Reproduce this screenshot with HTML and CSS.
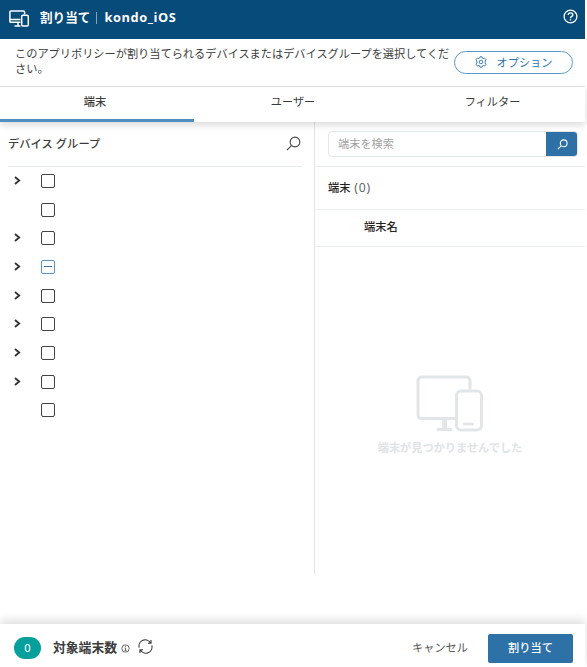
FILE: index.html
```html
<!DOCTYPE html>
<html lang="ja">
<head>
<meta charset="utf-8">
<title>割り当て</title>
<link rel="stylesheet" href="styles.css">
</head>
<body>
<div class="dialog">
  <header class="header">
    <svg class="header-icon" width="21" height="18" viewBox="0 0 21 18" fill="none" stroke="#fff" stroke-width="1.5">
      <path d="M11.5 12.3H2Q.9 12.3 .9 11.2V2Q.9.9 2 .9H14.5Q15.6.9 15.6 2V4.5M1 9.5H11.5M5.5 16H11.5M9 12.5V16"/>
      <rect x="12.7" y="5.2" width="6.6" height="10.8" rx="1.2"/>
    </svg>
    <h1 class="title">割り当て</h1>
    <span class="title-sep"></span>
    <span class="policy">kondo_iOS</span>
    <svg class="help" width="15" height="15" viewBox="0 0 15 15" fill="none" stroke="#fff">
      <circle cx="7.5" cy="7.5" r="6.4" stroke-width="1.3"/>
      <path d="M5.2 6.1Q5.2 3.9 7.5 3.9T9.8 5.9Q9.8 7 8.4 7.6Q7.5 8 7.5 9.2M7.5 10.2V11.6" stroke-width="1.4"/>
    </svg>
  </header>
  <section class="intro">
    <p class="intro-text">このアプリポリシーが割り当てられるデバイスまたはデバイスグループを選択してください。</p>
    <button class="options">
      <svg width="12" height="12" viewBox="0 0 12 12" fill="none" stroke="#2e75b0" stroke-width=".9" stroke-linejoin="round">
        <path d="M5 .8H7L7.4 2.2L8.2 2.6L9.6 2L11 3.7L10.1 5V7L11 8.3L9.6 10L8.2 9.4L7.4 9.8L7 11.2H5L4.6 9.8L3.8 9.4L2.4 10L1 8.3L1.9 7V5L1 3.7L2.4 2L3.8 2.6L4.6 2.2Z"/>
        <circle cx="6" cy="6" r="1.8"/>
      </svg>
      <span>オプション</span>
    </button>
  </section>
  <nav class="tabs">
    <div class="tab tab-active">端末</div>
    <div class="tab">ユーザー</div>
    <div class="tab">フィルター</div>
  </nav>
  <main class="content">
    <section class="groups">
      <div class="groups-head">
        <h2>デバイス グループ</h2>
        <svg width="15" height="15" viewBox="0 0 15 15" fill="none" stroke="#444" stroke-width="1.1"><circle cx="9" cy="6" r="4.9"/><path d="M5.4 9.6L.9 14.1"/></svg>
      </div>
      <ul class="tree">
        <li class="node"><svg class="chevron" viewBox="0 0 7 9"><path d="M1 1L5.2 4.5L1 8"/></svg><span class="box"></span></li>
        <li class="node"><span class="chevron"></span><span class="box"></span></li>
        <li class="node"><svg class="chevron" viewBox="0 0 7 9"><path d="M1 1L5.2 4.5L1 8"/></svg><span class="box"></span></li>
        <li class="node"><svg class="chevron" viewBox="0 0 7 9"><path d="M1 1L5.2 4.5L1 8"/></svg><span class="box box-partial"></span></li>
        <li class="node"><svg class="chevron" viewBox="0 0 7 9"><path d="M1 1L5.2 4.5L1 8"/></svg><span class="box"></span></li>
        <li class="node"><svg class="chevron" viewBox="0 0 7 9"><path d="M1 1L5.2 4.5L1 8"/></svg><span class="box"></span></li>
        <li class="node"><svg class="chevron" viewBox="0 0 7 9"><path d="M1 1L5.2 4.5L1 8"/></svg><span class="box"></span></li>
        <li class="node"><svg class="chevron" viewBox="0 0 7 9"><path d="M1 1L5.2 4.5L1 8"/></svg><span class="box"></span></li>
        <li class="node"><span class="chevron"></span><span class="box"></span></li>
      </ul>
    </section>
    <section class="devices">
      <div class="search-row">
        <div class="search">
          <span class="search-text">端末を検索</span>
          <button class="search-button"><svg width="11" height="11" viewBox="0 0 11 11" fill="none" stroke="#fff" stroke-width="1.1"><circle cx="6.7" cy="4.3" r="3.4"/><path d="M4.2 6.8L.8 10.2"/></svg></button>
        </div>
      </div>
      <div class="count-row"><b>端末</b> <span class="count">(0)</span></div>
      <div class="column-row">端末名</div>
      <div class="empty">
        <svg width="68" height="57" viewBox="0 0 68 57" fill="none" stroke="#e2e6e9" stroke-width="3">
          <path d="M39.5 43.5H6Q2 43.5 2 39.5V6Q2 2 6 2H50Q54 2 54 6V14.5"/>
          <rect x="40.5" y="16" width="25" height="39" rx="4.5"/>
          <path d="M48.5 49H56.5M22 54.5H35" stroke-linecap="round"/>
          <path d="M28.7 44V54" stroke-width="5"/>
        </svg>
        <p>端末が見つかりませんでした</p>
      </div>
    </section>
  </main>
  <footer class="footer">
    <span class="badge">0</span>
    <span class="total">対象端末数</span>
    <svg class="info" width="9" height="9" viewBox="0 0 9 9" fill="none" stroke="#444" stroke-width=".8"><circle cx="4.5" cy="4.5" r="3.7"/><path d="M4.5 2V3M3.6 4H4.6V6.5M3.5 6.6H5.6"/></svg>
    <svg class="refresh" width="15" height="15" viewBox="0 0 15 15" fill="none" stroke="#333" stroke-width="1.1"><path d="M1.2 8.6A6.2 6.2 0 0 1 12.6 4M13.8 6.4A6.2 6.2 0 0 1 2.4 11M13 1V4.2H10M2 14V10.8H5"/></svg>
    <span class="cancel">キャンセル</span>
    <button class="assign">割り当て</button>
  </footer>
</div>
</body>
</html>
```

FILE: styles.css
```css
* { box-sizing: border-box; }

body {
  margin: 0;
  background: #fff;
  color: #3c3c3c;
  font: 11.2px/15px "Noto Sans", "Noto Sans CJK JP", sans-serif;
}

h1, h2, p, ul { margin: 0; padding: 0; }
button { border: 0; padding: 0; font: inherit; }
svg { display: block; flex: none; }

.dialog {
  display: flex;
  flex-direction: column;
  width: 585px;
  height: 667px;
}

.header {
  display: flex;
  align-items: center;
  flex: none;
  height: 39px;
  padding: 0 7px 4px 9px;
  background: #064b7a;
  color: #fff;
  font-size: 12.6px;
  font-weight: 700;
}
.header-icon { margin-top: 3px; }
.title { margin-left: 10px; font-size: 12.6px; }
.title-sep { width: 1px; height: 12px; margin: 1px 7px 0 6px; background: #7fa3bc; }
.policy { font-family: "Open Sans", sans-serif; font-size: 12.8px; letter-spacing: .6px; }
.help { margin: -2px 0 0 auto; }

.intro {
  display: flex;
  flex: none;
  height: 48px;
  padding: 8px 12px 0 15px;
  border-bottom: 1px solid #e2e2e2;
}
.intro-text { width: 440px; line-height: 14.5px; }
.options {
  display: flex;
  align-items: center;
  justify-content: center;
  gap: 10px;
  width: 119px;
  height: 23px;
  margin-top: 4px;
  padding-bottom: 1px;
  border: 1px solid #5a9acb;
  border-radius: 12px;
  background: #fff;
  color: #2e75b0;
  flex: none;
}

.tabs {
  display: flex;
  flex: none;
  height: 35px;
  position: relative;
  box-shadow: 0 3px 7px rgba(0, 0, 0, .15);
}
.tab { width: 194px; flex: none; padding-left: 4px; line-height: 30px; text-align: center; }
.tab:last-child { width: 197px; padding-left: 12px; }
.tab-active { padding: 0 4px 0 0; border-bottom: 3px solid #4f8fc0; font-weight: 500; }

.content { display: flex; flex: none; height: 452px; }
.groups { width: 314px; padding: 0 12px 0 8px; }
.groups-head {
  display: flex;
  align-items: center;
  justify-content: space-between;
  height: 45px;
  padding: 0 1px 1px 0;
  border-bottom: 1px solid #e6eaeb;
}
.groups-head h2 { font-size: 11.3px; font-weight: 500; }
.tree { margin-top: -.5px; list-style: none; }
.node { display: flex; align-items: center; height: 28.7px; padding-left: 6px; }
.chevron { width: 7px; height: 9px; margin-top: -1px; fill: none; stroke: #333; stroke-width: 1.8; }
.box {
  display: flex;
  align-items: center;
  justify-content: center;
  width: 14px;
  height: 14px;
  margin-left: 20px;
  border: 1px solid #444;
  border-radius: 2px;
}
.box-partial { border-color: #5a93c3; }
.box-partial::after { content: ""; width: 8px; height: 1px; background: #3c7cb2; }

.devices { display: flex; flex-direction: column; width: 271px; border-left: 1px solid #dfe5e7; }
.search-row { height: 45px; padding: 9px 7px 0 13px; border-bottom: 1px solid #e8ecee; }
.search {
  display: flex;
  height: 26px;
  overflow: hidden;
  border: 1px solid #e2e6e8;
  border-radius: 4px;
}
.search-text { flex: 1; padding-left: 9px; line-height: 23px; color: #a2a2a2; }
.search-button {
  display: flex;
  align-items: center;
  justify-content: center;
  width: 32px;
  margin: -1px;
  background: #2e71a7;
}
.count-row { height: 43px; padding-left: 13px; border-bottom: 1px solid #edf0f1; line-height: 41px; color: #666; }
.count-row b { color: #222; font-weight: 500; }
.count { margin-left: 1px; font-size: 12.2px; letter-spacing: .8px; }
.column-row { height: 37px; padding-left: 49px; border-bottom: 1px solid #e9edef; line-height: 34px; color: #222; font-weight: 500; }
.empty { display: flex; flex-direction: column; align-items: center; padding-top: 128px; color: #dfe3e6; font-weight: 700; }
.empty p { margin-top: 8px; }

.footer {
  display: flex;
  align-items: center;
  flex: none;
  height: 43px;
  margin-top: 50px;
  padding: 5px 12px 0 14px;
  box-shadow: 0 -4px 9px rgba(0, 0, 0, .13);
}
.badge {
  width: 27px;
  height: 22px;
  border-radius: 11px;
  background: #05a09b;
  color: #fff;
  line-height: 22px;
  text-align: center;
}
.total { margin: -2px 0 0 12px; font-size: 12.8px; font-weight: 700; }
.info { margin: 0 0 0 4px; }
.refresh { margin: -3px 0 0 8px; }
.cancel { margin: -1px 20px 0 auto; color: #555; }
.assign { width: 85px; height: 29px; padding-bottom: 1px; border-radius: 2px; background: #2e71a7; color: #fff; font-weight: 500; }
```
